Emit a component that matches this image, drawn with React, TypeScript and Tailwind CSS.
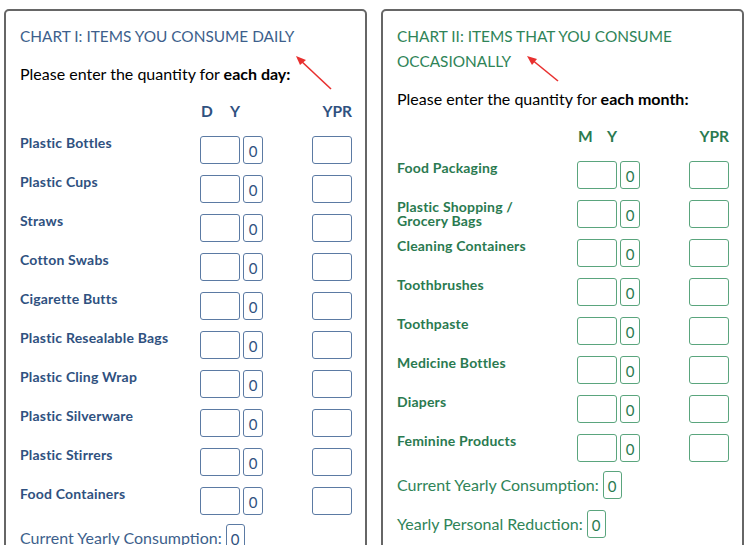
import React from "react";

type Theme = {
  title: string;
  label: string;
  box: string;
  boxText: string;
};

const blue: Theme = {
  title: "text-[#3d5f8c]",
  label: "text-[#2f5180]",
  box: "border-[#5b7aa3]",
  boxText: "text-[#2f5180]",
};

const green: Theme = {
  title: "text-[#2f8458]",
  label: "text-[#2a7a50]",
  box: "border-[#5aa57d]",
  boxText: "text-[#2a7a50]",
};

function Row({ label, t }: { label: React.ReactNode; t: Theme }) {
  return (
    <div className="flex items-start h-[28px] mb-[11px]">
      <div className={`w-[180px] whitespace-nowrap text-[14px] leading-[14px] tracking-[0.2px] font-bold ${t.label}`}>{label}</div>
      <div className={`w-[40px] h-[28px] border ${t.box} rounded-[3px]`} />
      <div
        className={`ml-[3px] w-[20px] h-[28px] border ${t.box} rounded-[3px] flex items-center justify-center text-[15px] pt-[2px] ${t.boxText}`}
      >
        0
      </div>
      <div className="flex-1" />
      <div className={`w-[40px] h-[28px] border ${t.box} rounded-[3px]`} />
    </div>
  );
}

function Total({ label, t }: { label: string; t: Theme }) {
  return (
    <div className="flex items-center h-[28px] mb-[11px]">
      <span className={`text-[16px] ${t.title}`}>{label}</span>
      <div
        className={`ml-[4px] w-[19px] h-[28px] border ${t.box} rounded-[3px] flex items-center justify-center text-[15px] pt-[2px] ${t.boxText}`}
      >
        0
      </div>
    </div>
  );
}

function Panel({
  title,
  unit,
  h1,
  items,
  totals,
  t,
}: {
  title: React.ReactNode;
  unit: string;
  h1: string;
  items: React.ReactNode[];
  totals: string[];
  t: Theme;
}) {
  return (
    <div className="w-[363px] border-2 border-[#666] rounded-[5px] pl-[14px] pr-[13px] pt-[13px] h-[560px] shrink-0">
      <div className={`text-[15.4px] leading-[25px] ${t.title}`}>{title}</div>
      <div className="mt-[15px] text-[16px] leading-[20px] text-black">
        Please enter the quantity for <span className="font-bold">{unit}</span>
      </div>
      <div className={`mt-[18px] flex h-[20px] items-center text-[15.5px] font-bold ${t.label}`}>
        <div className="w-[180px]" />
        <div className="w-[63px] flex">
          <span className="w-[30px] text-left pl-[1px]">{h1}</span>
          <span>Y</span>
        </div>
        <div className="flex-1" />
        <span>YPR</span>
      </div>
      <div className="mt-[14px]">
        {items.map((i, k) => (
          <Row key={k} label={i} t={t} />
        ))}
        <div className="-mt-[2px]">
          {totals.map((l) => (
            <Total key={l} label={l} t={t} />
          ))}
        </div>
      </div>
    </div>
  );
}

export default function App() {
  return (
    <div
      className="relative w-[750px] h-[545px] overflow-hidden bg-white pl-[4px] pt-[9px] flex gap-[14px]"
      style={{ fontFamily: "Lato, 'Open Sans', sans-serif" }}
    >
      <Panel
        title="CHART I: ITEMS YOU CONSUME DAILY"
        unit="each day:"
        h1="D"
        t={blue}
        items={[
          "Plastic Bottles",
          "Plastic Cups",
          "Straws",
          "Cotton Swabs",
          "Cigarette Butts",
          "Plastic Resealable Bags",
          "Plastic Cling Wrap",
          "Plastic Silverware",
          "Plastic Stirrers",
          "Food Containers",
        ]}
        totals={["Current Yearly Consumption:"]}
      />
      <Panel
        title={
          <>
            CHART II: ITEMS THAT YOU CONSUME
            <br />
            OCCASIONALLY
          </>
        }
        unit="each month:"
        h1="M"
        t={green}
        items={[
          "Food Packaging",
          <>
            Plastic Shopping /
            <br />
            Grocery Bags
          </>,
          "Cleaning Containers",
          "Toothbrushes",
          "Toothpaste",
          "Medicine Bottles",
          "Diapers",
          "Feminine Products",
        ]}
        totals={["Current Yearly Consumption:", "Yearly Personal Reduction:"]}
      />
      <svg className="absolute left-0 top-0 pointer-events-none" width="750" height="545">
        <line x1="331" y1="89" x2="299" y2="59" stroke="#e8302f" strokeWidth="1.6" />
        <path d="M296,56 L306,60 L300,65 Z" fill="#e8302f" />
        <line x1="558" y1="81" x2="531" y2="59" stroke="#e8302f" strokeWidth="1.6" />
        <path d="M527,56 L537,59 L532,65 Z" fill="#e8302f" />
      </svg>
    </div>
  );
}
